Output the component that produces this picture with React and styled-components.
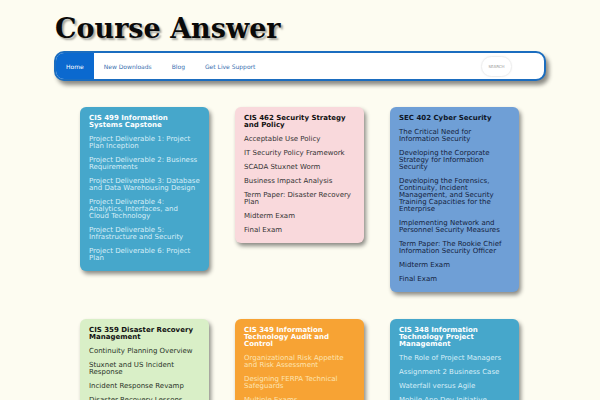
import React from 'react'
import styled, { createGlobalStyle } from 'styled-components'

const courses = [
  {
    title: 'CIS 499 Information Systems Capstone',
    bg: '#46a7cb', head: '#ffffff', link: '#d6eef8',
    items: [
      'Project Deliverable 1: Project Plan Inception',
      'Project Deliverable 2: Business Requirements',
      'Project Deliverable 3: Database and Data Warehousing Design',
      'Project Deliverable 4: Analytics, Interfaces, and Cloud Technology',
      'Project Deliverable 5: Infrastructure and Security',
      'Project Deliverable 6: Project Plan',
    ],
  },
  {
    title: 'CIS 462 Security Strategy and Policy',
    bg: '#f9d9dc', head: '#111111', link: '#333333',
    items: [
      'Acceptable Use Policy',
      'IT Security Policy Framework',
      'SCADA Stuxnet Worm',
      'Business Impact Analysis',
      'Term Paper: Disaster Recovery Plan',
      'Midterm Exam',
      'Final Exam',
    ],
  },
  {
    title: 'SEC 402 Cyber Security',
    bg: '#6f9fd6', head: '#0d1526', link: '#14223c',
    items: [
      'The Critical Need for Information Security',
      'Developing the Corporate Strategy for Information Security',
      'Developing the Forensics, Continuity, Incident Management, and Security Training Capacities for the Enterprise',
      'Implementing Network and Personnel Security Measures',
      'Term Paper: The Rookie Chief Information Security Officer',
      'Midterm Exam',
      'Final Exam',
    ],
  },
  {
    title: 'CIS 359 Disaster Recovery Management',
    bg: '#d9efc7', head: '#111111', link: '#2a3328',
    items: [
      'Continuity Planning Overview',
      'Stuxnet and US Incident Response',
      'Incident Response Revamp',
      'Disaster Recovery Lessons',
      'Business Continuity Plan',
    ],
  },
  {
    title: 'CIS 349 Information Technology Audit and Control',
    bg: '#f7a334', head: '#ffffff', link: '#fde4b2',
    items: [
      'Organizational Risk Appetite and Risk Assessment',
      'Designing FERPA Technical Safeguards',
      'Multiple Exams',
      'Final Exam',
    ],
  },
  {
    title: 'CIS 348 Information Technology Project Management',
    bg: '#46a7cb', head: '#ffffff', link: '#d6eef8',
    items: [
      'The Role of Project Managers',
      'Assignment 2 Business Case',
      'Waterfall versus Agile',
      'Mobile App Dev Initiative',
    ],
  },
]

const navLinks = ['Home', 'New Downloads', 'Blog', 'Get Live Support']

export default function App() {
  return (
    <>
      <GlobalStyle />
      <Page>
        <Title>Course Answer</Title>
        <Nav>
          <NavList>
            {navLinks.map((l, i) => (
              <NavItem key={l} $active={i === 0}>{l}</NavItem>
            ))}
          </NavList>
          <SearchButton>SEARCH</SearchButton>
        </Nav>
        <Grid>
          {courses.map(c => (
            <Card key={c.title} $bg={c.bg}>
              <CardTitle $color={c.head}>{c.title}</CardTitle>
              {c.items.map(item => (
                <CardLink key={item} $color={c.link}>{item}</CardLink>
              ))}
            </Card>
          ))}
        </Grid>
      </Page>
    </>
  )
}

const GlobalStyle = createGlobalStyle`
  body {
    margin: 0;
    background: #fdfcf1;
    font-family: "DejaVu Sans", Verdana, sans-serif;
  }
`

const Page = styled.div`
  width: 492px;
  margin: 0 auto;
  padding-top: 12px;
`

const Title = styled.h1`
  margin: 0 0 0 1px;
  font-family: "DejaVu Serif", "Liberation Serif", serif;
  font-size: 27px;
  font-weight: bold;
  line-height: 34px;
  color: #0a0a0a;
  text-shadow: 2px 2px 2px rgba(0, 0, 0, 0.35);
`

const Nav = styled.nav`
  margin-top: 5px;
  height: 26px;
  display: flex;
  align-items: center;
  justify-content: space-between;
  background: #ffffff;
  border: 2px solid #1b6dbf;
  border-radius: 10px;
  overflow: hidden;
  box-shadow: 3px 4px 4px rgba(0, 0, 0, 0.45);
  padding-right: 32px;
`

const NavList = styled.ul`
  list-style: none;
  margin: 0;
  padding: 0;
  display: flex;
  height: 100%;
`

const NavItem = styled.li`
  display: flex;
  align-items: center;
  padding: 0 10px;
  font-size: 6px;
  color: ${p => (p.$active ? '#ffffff' : '#3a6fb0')};
  background: ${p => (p.$active ? '#0b69cf' : 'transparent')};
`

const SearchButton = styled.button`
  width: 31px;
  height: 21px;
  padding: 0;
  border: 1px solid #eeeeee;
  border-radius: 11px;
  background: #ffffff;
  color: #9a9a9a;
  font-family: "DejaVu Sans", sans-serif;
  font-size: 4px;
  box-shadow: 0 0 2px rgba(0, 0, 0, 0.06);
`

const Grid = styled.div`
  margin: 26px auto 0;
  width: 440px;
  display: grid;
  grid-template-columns: repeat(3, 129px);
  column-gap: 26px;
  row-gap: 27px;
  align-items: start;
`

const Card = styled.div`
  background: ${p => p.$bg};
  border-radius: 6px;
  padding: 8px 9px 9px;
  box-shadow: 2px 3px 4px rgba(0, 0, 0, 0.45);
`

const CardTitle = styled.div`
  font-size: 7px;
  font-weight: bold;
  line-height: 7px;
  color: ${p => p.$color};
`

const CardLink = styled.div`
  margin-top: 7px;
  font-size: 7px;
  line-height: 7px;
  color: ${p => p.$color};
`
